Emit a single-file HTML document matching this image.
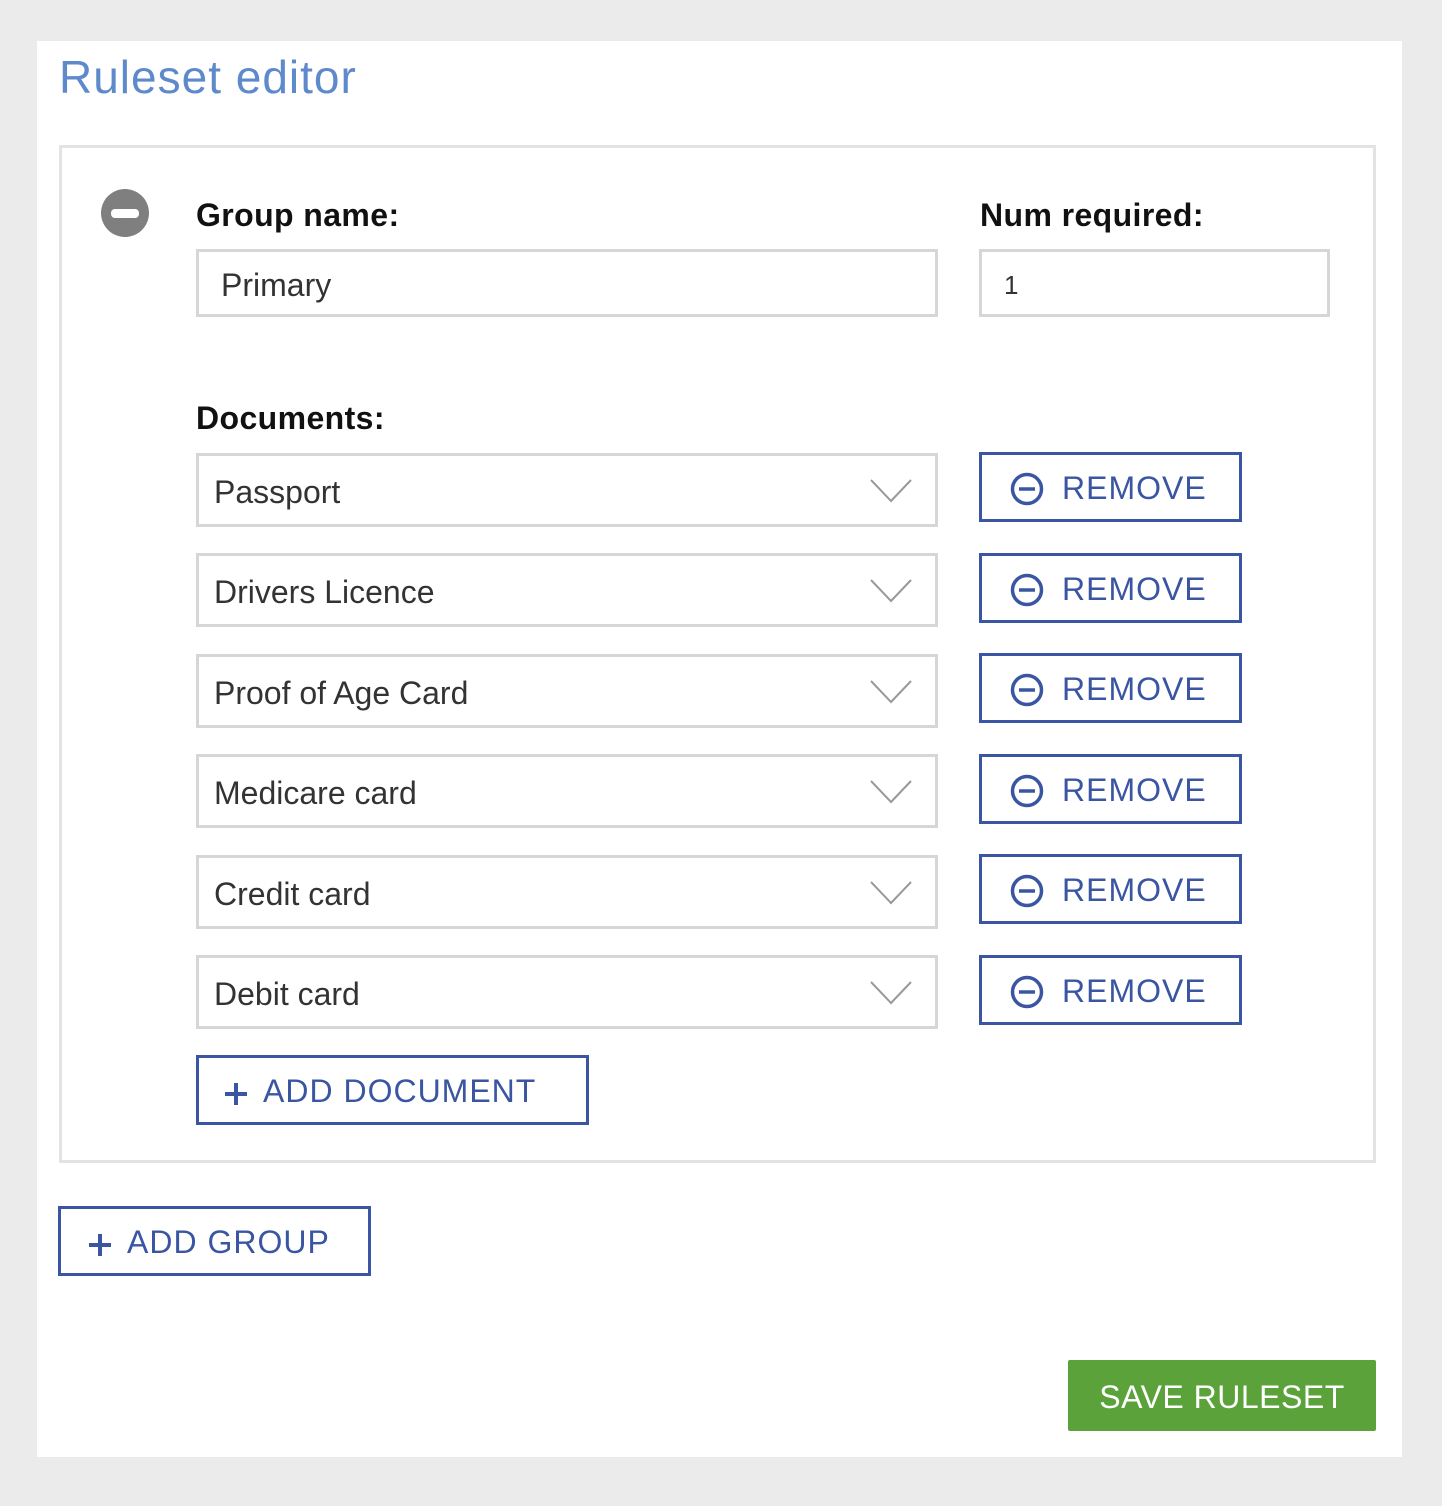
<!DOCTYPE html>
<html><head><meta charset="utf-8"><style>
*{box-sizing:border-box;margin:0;padding:0}
body{width:1442px;height:1506px;background:#ebebeb;font-family:"Liberation Sans",sans-serif;position:relative;overflow:hidden}
.card{position:absolute;left:37px;top:41px;width:1365px;height:1416px;background:#fff}
.a{position:absolute}
h1{position:absolute;left:59px;top:50px;font-weight:normal;font-size:46px;color:#5e8acb;letter-spacing:1px}
.group{position:absolute;left:59px;top:145px;width:1317px;height:1018px;border:3px solid #e3e3e3}
.lbl{position:absolute;font-weight:bold;font-size:32px;color:#111;letter-spacing:0.4px}
.inp{position:absolute;border:3px solid #d6d6d6;background:#fff;font-size:32px;color:#333;padding-left:22px;padding-top:4px;display:flex;align-items:center}
.sel{left:196px;width:742px;height:74px;padding-left:15px}
.sel svg{position:absolute;right:22px;top:22px}
.btn{position:absolute;border:3px solid #3a55a2;color:#3a55a2;font-size:32px;display:flex;align-items:center;letter-spacing:1px;background:#fff;padding-top:3px}
.rm{left:979px;width:263px;height:70px;padding-left:28px}
.rm svg{margin-right:18px}
</style></head><body>
<div class="card"></div>
<h1>Ruleset editor</h1>
<div class="group"></div>
<svg class="a" style="left:100px;top:188px" width="50" height="50"><circle cx="25" cy="25" r="24" fill="#7f7f7f"/><rect x="11" y="21" width="28" height="9" rx="4" fill="#fff"/></svg>
<div class="lbl" style="left:196px;top:197px">Group name:</div>
<div class="lbl" style="left:980px;top:197px">Num required:</div>
<div class="inp" style="left:196px;top:249px;width:742px;height:68px">Primary</div>
<div class="inp" style="left:979px;top:249px;width:351px;height:68px;font-size:26px">1</div>
<div class="lbl" style="left:196px;top:400px">Documents:</div>

<div class="inp sel" style="top:453px">Passport<svg width="44" height="26"><path d="M2 2 L22 23 L42 2" fill="none" stroke="#999" stroke-width="2"/></svg></div>
<div class="inp sel" style="top:553px">Drivers Licence<svg width="44" height="26"><path d="M2 2 L22 23 L42 2" fill="none" stroke="#999" stroke-width="2"/></svg></div>
<div class="inp sel" style="top:654px">Proof of Age Card<svg width="44" height="26"><path d="M2 2 L22 23 L42 2" fill="none" stroke="#999" stroke-width="2"/></svg></div>
<div class="inp sel" style="top:754px">Medicare card<svg width="44" height="26"><path d="M2 2 L22 23 L42 2" fill="none" stroke="#999" stroke-width="2"/></svg></div>
<div class="inp sel" style="top:855px">Credit card<svg width="44" height="26"><path d="M2 2 L22 23 L42 2" fill="none" stroke="#999" stroke-width="2"/></svg></div>
<div class="inp sel" style="top:955px">Debit card<svg width="44" height="26"><path d="M2 2 L22 23 L42 2" fill="none" stroke="#999" stroke-width="2"/></svg></div>

<div class="btn rm" style="top:452px"><svg width="34" height="34"><circle cx="17" cy="17" r="14.5" fill="none" stroke="#3a55a2" stroke-width="3.5"/><path d="M9 17H25" stroke="#3a55a2" stroke-width="3.5"/></svg>REMOVE</div>
<div class="btn rm" style="top:553px"><svg width="34" height="34"><circle cx="17" cy="17" r="14.5" fill="none" stroke="#3a55a2" stroke-width="3.5"/><path d="M9 17H25" stroke="#3a55a2" stroke-width="3.5"/></svg>REMOVE</div>
<div class="btn rm" style="top:653px"><svg width="34" height="34"><circle cx="17" cy="17" r="14.5" fill="none" stroke="#3a55a2" stroke-width="3.5"/><path d="M9 17H25" stroke="#3a55a2" stroke-width="3.5"/></svg>REMOVE</div>
<div class="btn rm" style="top:754px"><svg width="34" height="34"><circle cx="17" cy="17" r="14.5" fill="none" stroke="#3a55a2" stroke-width="3.5"/><path d="M9 17H25" stroke="#3a55a2" stroke-width="3.5"/></svg>REMOVE</div>
<div class="btn rm" style="top:854px"><svg width="34" height="34"><circle cx="17" cy="17" r="14.5" fill="none" stroke="#3a55a2" stroke-width="3.5"/><path d="M9 17H25" stroke="#3a55a2" stroke-width="3.5"/></svg>REMOVE</div>
<div class="btn rm" style="top:955px"><svg width="34" height="34"><circle cx="17" cy="17" r="14.5" fill="none" stroke="#3a55a2" stroke-width="3.5"/><path d="M9 17H25" stroke="#3a55a2" stroke-width="3.5"/></svg>REMOVE</div>

<div class="btn" style="left:196px;top:1055px;width:393px;height:70px;padding-left:24px"><svg width="26" height="26" style="margin-right:14px;margin-top:4px"><path d="M13 2V24M2 13H24" stroke="#3a55a2" stroke-width="4"/></svg>ADD DOCUMENT</div>
<div class="btn" style="left:58px;top:1206px;width:313px;height:70px;padding-left:26px"><svg width="26" height="26" style="margin-right:14px;margin-top:4px"><path d="M13 2V24M2 13H24" stroke="#3a55a2" stroke-width="4"/></svg>ADD GROUP</div>
<div class="a" style="left:1068px;top:1360px;width:308px;height:71px;background:#5ba23a;border-radius:2px;color:#fff;font-size:32px;display:flex;align-items:center;justify-content:center;letter-spacing:0.5px;padding-top:4px">SAVE RULESET</div>
</body></html>
